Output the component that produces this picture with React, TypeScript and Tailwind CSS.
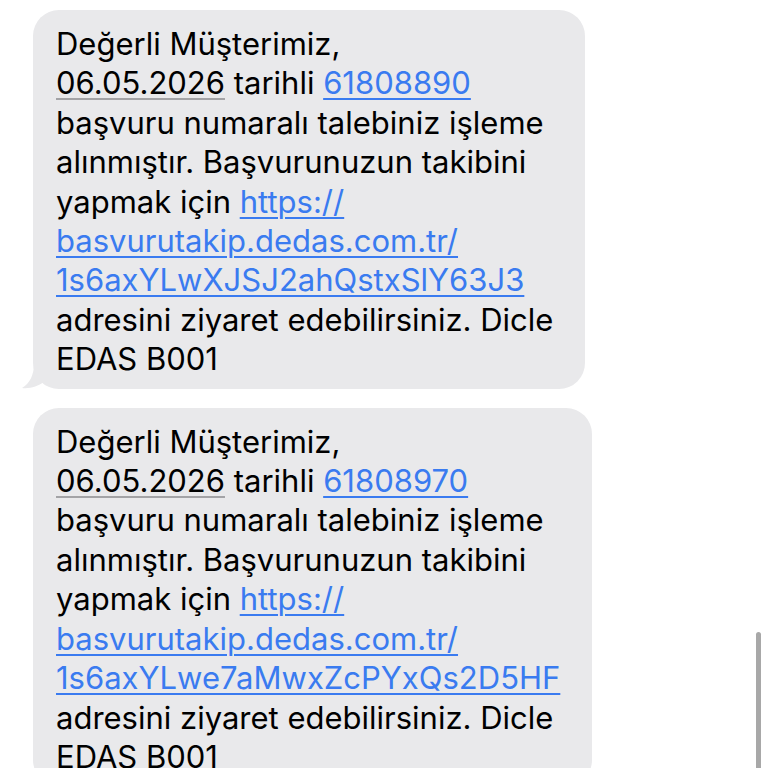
import React from 'react';

type Msg = { number: string; path: string };

const messages: Msg[] = [
  { number: '61808890', path: '1s6axYLwXJSJ2ahQstxSlY63J3' },
  { number: '61808970', path: '1s6axYLwe7aMwxZcPYxQs2D5HF' },
];

const Link: React.FC<{ children: React.ReactNode }> = ({ children }) => (
  <span className="text-[#3a7bf0] underline decoration-[#3a7bf0] decoration-[2px] underline-offset-[4px]">
    {children}
  </span>
);

const Bubble: React.FC<{ msg: Msg; tail?: boolean }> = ({ msg, tail }) => (
  <div className="relative w-fit">
    <div className="bg-[#e9e9eb] rounded-[26px] pl-[23px] pr-[32px] pt-[14px] pb-[10px] text-black text-[31px] leading-[39.4px]">
      Değerli Müşterimiz,
      <br />
      <span className="underline decoration-[#a3a3a6] decoration-[2px] underline-offset-[4px]">06.05.2026</span> tarihli{' '}
      <Link>{msg.number}</Link>
      <br />
      başvuru numaralı talebiniz işleme
      <br />
      alınmıştır. Başvurunuzun takibini
      <br />
      yapmak için <Link>https://</Link>
      <br />
      <Link>basvurutakip.dedas.com.tr/</Link>
      <br />
      <Link>{msg.path}</Link>
      <br />
      adresini ziyaret edebilirsiniz. Dicle
      <br />
      EDAS B001
    </div>
    {tail && (
      <svg className="absolute left-[-11px] bottom-0" width="30" height="26" viewBox="0 0 30 26">
        <path d="M12 0 C12 12 8 20 0 25 C8 26 16 23 22 19 L30 19 L30 0 Z" fill="#e9e9eb" />
      </svg>
    )}
  </div>
);

const App: React.FC = () => {
  return (
    <div
      className="relative w-[768px] h-[768px] overflow-hidden bg-white"
      style={{ fontFamily: 'Inter, "Noto Sans", sans-serif' }}
    >
      <div className="flex flex-col gap-[19px] pt-[10px] pl-[33px]">
        {messages.map((m, i) => (
          <Bubble key={i} msg={m} tail={i === 0} />
        ))}
      </div>
      <div className="absolute left-[756px] top-[632px] w-[5px] h-[150px] rounded-full bg-[#a8a8a8]" />
    </div>
  );
};

export default App;
